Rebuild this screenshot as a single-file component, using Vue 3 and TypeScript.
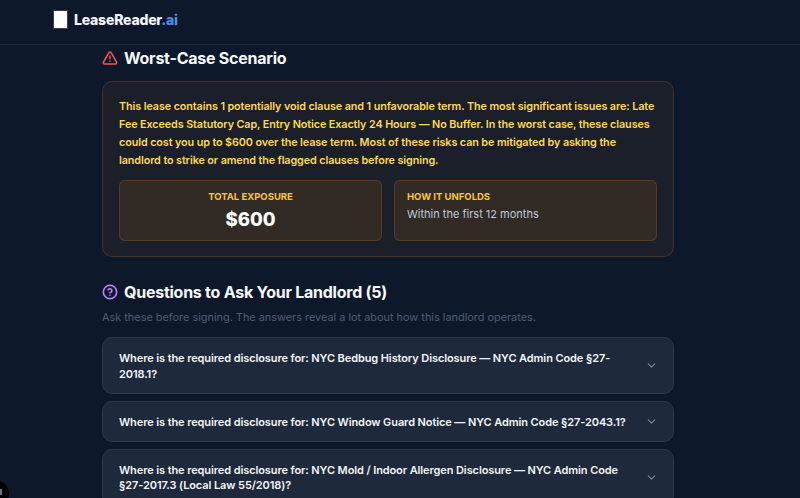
<script setup lang="ts">
const questions: string[] = [
  'Where is the required disclosure for: NYC Bedbug History Disclosure — NYC Admin Code §27-2018.1?',
  'Where is the required disclosure for: NYC Window Guard Notice — NYC Admin Code §27-2043.1?',
  'Where is the required disclosure for: NYC Mold / Indoor Allergen Disclosure — NYC Admin Code §27-2017.3 (Local Law 55/2018)?',
]
</script>

<template>
  <div class="page">
    <header class="topbar">
      <div class="logo-mark"></div>
      <span class="logo-text">LeaseReader<span class="logo-ai">.ai</span></span>
    </header>
    <main class="content">
      <h2 class="heading">
        <svg class="head-icon" viewBox="0 0 24 24" fill="none" stroke="#ef5350" stroke-width="2.3" stroke-linecap="round" stroke-linejoin="round">
          <path d="m21.73 18-8-14a2 2 0 0 0-3.48 0l-8 14A2 2 0 0 0 4 21h16a2 2 0 0 0 1.73-3" />
          <path d="M12 9v4" />
          <path d="M12 17h.01" />
        </svg>
        Worst-Case Scenario
      </h2>
      <section class="risk">
        <p class="risk-text">This lease contains 1 potentially void clause and 1 unfavorable term. The most significant issues are: Late Fee Exceeds Statutory Cap, Entry Notice Exactly 24 Hours — No Buffer. In the worst case, these clauses could cost you up to $600 over the lease term. Most of these risks can be mitigated by asking the landlord to strike or amend the flagged clauses before signing.</p>
        <div class="stats">
          <div class="stat stat-center">
            <div class="stat-label">TOTAL EXPOSURE</div>
            <div class="stat-value">$600</div>
          </div>
          <div class="stat">
            <div class="stat-label">HOW IT UNFOLDS</div>
            <div class="stat-body">Within the first 12 months</div>
          </div>
        </div>
      </section>
      <h2 class="heading heading-q">
        <svg class="head-icon" viewBox="0 0 24 24" fill="none" stroke="#c084fc" stroke-width="2.3" stroke-linecap="round" stroke-linejoin="round">
          <circle cx="12" cy="12" r="10" />
          <path d="M9.09 9a3 3 0 0 1 5.83 1c0 2-3 3-3 3" />
          <path d="M12 17h.01" />
        </svg>
        Questions to Ask Your Landlord (5)
      </h2>
      <p class="sub">Ask these before signing. The answers reveal a lot about how this landlord operates.</p>
      <div class="list">
        <div v-for="q in questions" :key="q" class="q">
          <span class="q-text">{{ q }}</span>
          <svg class="chev" viewBox="0 0 24 24" fill="none" stroke="#7c8aa0" stroke-width="2" stroke-linecap="round" stroke-linejoin="round"><path d="m6 9 6 6 6-6" /></svg>
        </div>
      </div>
    </main>
    <div class="dev-dot"></div>
  </div>
</template>

<style>
html, body { margin: 0; background: #0e182b; overflow: hidden; }
</style>

<style scoped>
.page {
  position: relative;
  width: 800px;
  height: 498px;
  overflow: hidden;
  background: #0e182b;
  font-family: Inter, "Noto Sans", sans-serif;
  color: #fff;
}
.topbar {
  box-sizing: border-box;
  height: 45px;
  border-bottom: 1px solid #1c2638;
  padding: 0 53px 5px;
  display: flex;
  align-items: center;
  gap: 6px;
}
.logo-mark { box-sizing: border-box; width: 15px; height: 19px; background: #fff; border: 1px solid #334155; border-radius: 1px; }
.logo-text { font-size: 14px; font-weight: 800; color: #f1f5f9; letter-spacing: -0.2px; }
.logo-ai { color: #4c8ff0; }
.content { width: 572px; margin-left: 102px; }
.heading {
  margin: 0;
  display: flex;
  align-items: center;
  gap: 6px;
  height: 26px;
  font-size: 16px;
  font-weight: 700;
  letter-spacing: -0.25px;
  color: #f8fafc;
}
.head-icon { width: 16px; height: 16px; flex: none; }
.risk {
  box-sizing: border-box;
  margin-top: 10px;
  height: 176px;
  padding: 16px;
  border: 1px solid rgba(146, 88, 40, 0.32);
  border-radius: 10px;
  background: #1b1f29;
}
.risk-text { margin: 0; font-size: 10.8px; letter-spacing: -0.1px; line-height: 17.9px; font-weight: 600; color: #fdd950; }
.stats { display: grid; grid-template-columns: 1fr 1fr; gap: 12px; margin-top: 10px; }
.stat {
  box-sizing: border-box;
  height: 61px;
  padding: 10px 12px;
  border: 1px solid rgba(146, 88, 40, 0.38);
  border-radius: 6px;
  background: #322b25;
}
.stat-center { text-align: center; }
.stat-label { font-size: 9.5px; font-weight: 700; color: #fcc52e; line-height: 12px; }
.stat-value { font-size: 18.5px; font-weight: 800; line-height: 26px; margin-top: 3px; }
.stat-body { font-size: 11px; line-height: 16px; color: #c0c9da; margin-top: 3px; }
.heading-q { margin-top: 22px; }
.sub { margin: 4px 0 0; font-size: 10.9px; line-height: 16px; color: #4f5d73; }
.list { display: flex; flex-direction: column; gap: 6.5px; margin-top: 12.3px; }
.q {
  box-sizing: border-box;
  display: flex;
  align-items: center;
  justify-content: space-between;
  padding: 12px 15.5px 12px 16px;
  border: 1px solid #2b384b;
  border-radius: 10px;
  background: #1e293b;
}
.q-text { width: 510px; font-size: 11px; letter-spacing: -0.1px; line-height: 15.5px; font-weight: 600; color: #f1f5f9; padding-top: 1px; margin-bottom: -1px; }
.chev { width: 13px; height: 13px; flex: none; }
.dev-dot { position: absolute; left: -19px; top: 480px; width: 28px; height: 28px; border-radius: 50%; background: #000; }
.dev-dot::after { content: ""; position: absolute; left: 19px; top: 9px; width: 2px; height: 6px; background: #6b7280; }
</style>
